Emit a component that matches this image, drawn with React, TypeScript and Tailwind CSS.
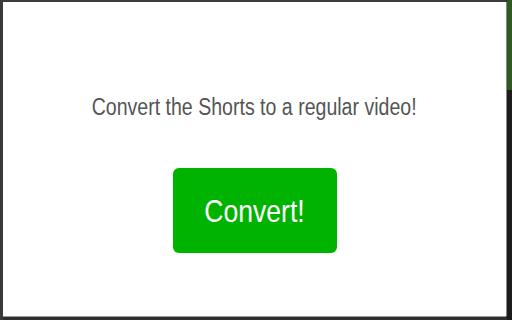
export default function App() {
  return (
    <div className="flex h-[320px] w-[512px] bg-[#2e2e2e] font-['Liberation_Sans',Arial,sans-serif]">
      <div className="w-[3px] shrink-0 bg-[#3a3a3a]" />
      <div className="flex flex-1 flex-col">
        <div className="h-[2px] bg-[#3c3c3c]" />
        <main className="flex flex-1 flex-col items-center bg-white">
          <p className="mt-[93px] scale-x-[0.85] text-[23px] leading-6 text-[#555]">
            Convert the Shorts to a regular video!
          </p>
          <button
            type="button"
            className="mt-[49px] flex h-[85px] w-[164px] items-center justify-center rounded-md bg-[#00b300] shadow-[0_0_3px_rgba(0,0,0,0.08)]"
          >
            <span className="scale-x-[0.83] text-[32px] leading-none text-white">Convert!</span>
          </button>
        </main>
        <div className="h-[1px] bg-[#9a9a9a]" />
        <div className="h-[3px] bg-[#2e2e2e]" />
      </div>
      <div className="flex w-[6px] shrink-0">
        <div className="mb-[4px] mt-[2px] w-[1px] bg-[#8a8a8a]" />
        <div className="flex flex-1 flex-col">
          <div className="h-[90px] bg-[#2f5a22]" />
          <div className="flex-1 bg-[#1c1c1c]" />
        </div>
      </div>
    </div>
  );
}
